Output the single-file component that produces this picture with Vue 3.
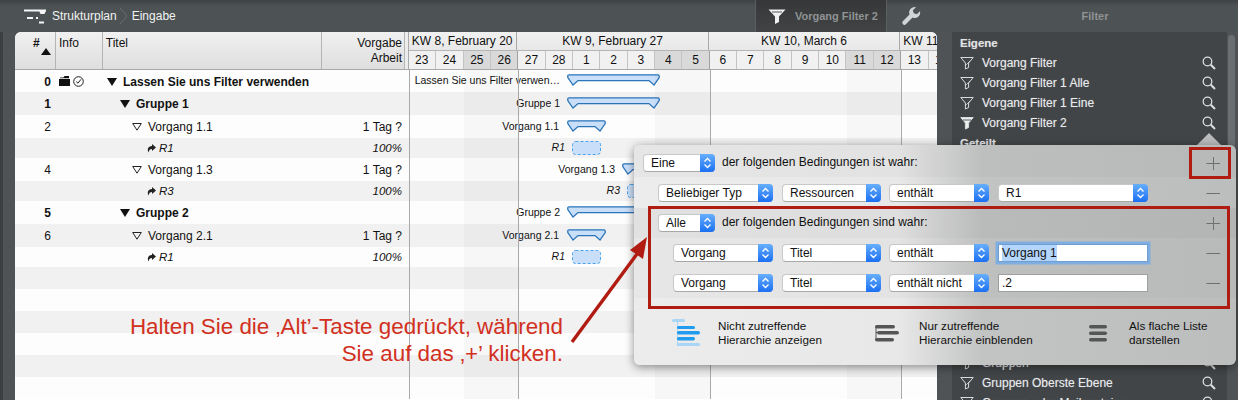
<script setup>
const rows = [
  { id: '0', h: 22, kind: 'root', title: 'Lassen Sie uns Filter verwenden', bar: { type: 'sum', x: 157, w: 93 }, label: 'Lassen Sie uns Filter verwen…', end: 150 },
  { id: '1', h: 23, kind: 'group', title: 'Gruppe 1', bar: { type: 'sum', x: 157, w: 93 }, label: 'Gruppe 1', end: 150 },
  { id: '2', h: 23, kind: 'task', title: 'Vorgang 1.1', work: '1 Tag ?', bar: { type: 'sum', x: 157, w: 39 }, label: 'Vorgang 1.1', end: 149 },
  { id: '', h: 20, kind: 'res', title: 'R1', work: '100%', bar: { type: 'box', x: 162, w: 29 }, label: 'R1', end: 155 },
  { id: '4', h: 23, kind: 'task', title: 'Vorgang 1.3', work: '1 Tag ?', bar: { type: 'sum', x: 212, w: 39 }, label: 'Vorgang 1.3', end: 205 },
  { id: '', h: 20, kind: 'res', title: 'R3', work: '100%', bar: { type: 'box', x: 217, w: 29 }, label: 'R3', end: 210 },
  { id: '5', h: 23, kind: 'group', title: 'Gruppe 2', bar: { type: 'sum', x: 157, w: 93 }, label: 'Gruppe 2', end: 150 },
  { id: '6', h: 23, kind: 'task', title: 'Vorgang 2.1', work: '1 Tag ?', bar: { type: 'sum', x: 157, w: 39 }, label: 'Vorgang 2.1', end: 149 },
  { id: '', h: 20, kind: 'res', title: 'R1', work: '100%', bar: { type: 'box', x: 162, w: 29 }, label: 'R1', end: 155 },
  { id: '', h: 22, kind: 'empty' },
  { id: '', h: 22, kind: 'empty' },
  { id: '', h: 22, kind: 'empty' },
  { id: '', h: 22, kind: 'empty' },
  { id: '', h: 22, kind: 'empty' },
  { id: '', h: 22, kind: 'empty' }
]

const weeks = [
  { label: 'KW 8, February 20', width: 109.4 },
  { label: 'KW 9, February 27', width: 191.45 },
  { label: 'KW 10, March 6', width: 191.45 },
  { label: 'KW 11', width: 37 }
]

const days = [23, 24, 25, 26, 27, 28, 1, 2, 3, 4, 5, 6, 7, 8, 9, 10, 11, 12, 13, 14]
const weekend = (i) => [2, 3, 9, 10, 16, 17].includes(i)
const weekStart = (i) => [4, 11, 18].includes(i)

function barPath(w) {
  return `M2 .8H${w - 2}Q${w - .8} .8 ${w - .8} 2V3.5L${w - 6} 11L${w - 11} 6.6H11L6 11L.8 3.5V2Q.8 .8 2 .8Z`
}

const ownFilters = [
  { name: 'Vorgang Filter' },
  { name: 'Vorgang Filter 1 Alle' },
  { name: 'Vorgang Filter 1 Eine' },
  { name: 'Vorgang Filter 2', active: true }
]
const lowerFilters = ['Gruppen', 'Gruppen Oberste Ebene', 'Gruppen oder Meilensteine']
</script>

<template>
  <div class="page">
    <header class="topbar">
      <div class="crumbs">
        <svg class="app-icon" width="22" height="16" viewBox="0 0 22 16">
          <path d="M0 2.5H22" stroke="#f6f6f6" stroke-width="2" />
          <path d="M15 2.5H22L20.5 6H16.5Z" fill="#f6f6f6" />
          <path d="M3 10H9M12 10H14M15 14.5H20" stroke="#f6f6f6" stroke-width="2" />
        </svg>
        <span class="crumb">Strukturplan</span>
        <svg class="crumb-sep" width="10" height="18" viewBox="0 0 10 18">
          <path d="M1 1L8 9L1 17" fill="none" stroke="#6c7072" />
        </svg>
        <span class="crumb">Eingabe</span>
      </div>
      <div class="filter-btn">
        <svg width="18" height="17" viewBox="0 0 18 17">
          <path d="M.5 1.5H17.5L11 8.5V14L7 16V8.5Z" fill="#f0f0f0" />
          <path d="M4 4H14" stroke="#55595b" />
        </svg>
        <span>Vorgang Filter 2</span>
      </div>
      <svg class="wrench" width="20" height="20" viewBox="0 0 20 20">
        <path d="M13.5 1a5.5 5.5 0 0 0-5 7.6L1.8 15.2a2.2 2.2 0 0 0 3.1 3.1l6.6-6.7a5.5 5.5 0 0 0 7.5-6.4l-3.2 3.1-3-1-1-3L15 1.2a5.5 5.5 0 0 0-1.5-.2Z" fill="#d2d5d5" />
      </svg>
      <div class="side-title">Filter</div>
    </header>

    <main class="main">
      <section class="table">
        <div class="thead">
          <div class="th th-num">
            <span>#</span>
            <i class="sort"></i>
          </div>
          <div class="th th-info">Info</div>
          <div class="th th-title">Titel</div>
          <div class="th th-work">Vorgabe<br />Arbeit</div>
          <div class="th-gap"></div>
          <div class="gantt-head">
            <div class="weeks">
              <div v-for="w in weeks" :key="w.label" class="week" :style="{ width: w.width + 'px' }">{{ w.label }}</div>
            </div>
            <div class="days">
              <div v-for="(d, i) in days" :key="i" class="day" :class="{ off: weekend(i), start: weekStart(i) }">{{ d }}</div>
            </div>
          </div>
        </div>

        <div class="tbody">
          <div v-for="(r, n) in rows" :key="n" class="row" :class="[r.kind, n % 2 ? 'odd' : 'even']" :style="{ height: r.h + 'px' }">
            <div class="c-num">{{ r.id }}</div>
            <div class="c-info">
              <template v-if="r.kind === 'root'">
                <svg width="11" height="10" viewBox="0 0 11 10">
                  <path d="M0 3H11V10H0Z M1 1.5H4.5L5.5 0H10V2.2H1Z" fill="#111" />
                </svg>
                <svg width="11" height="11" viewBox="0 0 11 11">
                  <circle cx="5.5" cy="5.5" r="4.8" fill="none" stroke="#222" />
                  <path d="M3.3 5.6L5 7.2L8 3.3" fill="none" stroke="#222" />
                </svg>
              </template>
            </div>
            <div class="c-title">
              <svg v-if="r.kind === 'root' || r.kind === 'group'" class="tri" width="10" height="8" viewBox="0 0 10 8">
                <path d="M0 0H10L5 8Z" fill="#111" />
              </svg>
              <svg v-if="r.kind === 'task'" class="tri" width="10" height="8" viewBox="0 0 10 8">
                <path d="M.7 .5H9.3L5 7.2Z" fill="none" stroke="#222" />
              </svg>
              <svg v-if="r.kind === 'res'" class="res-arrow" width="9" height="9" viewBox="0 0 9 9">
                <path d="M5 0L9 3.5L5 7V5C3 5 2 6 1.5 8.5C.2 6 .5 2 5 2Z" fill="#222" />
              </svg>
              <span>{{ r.title }}</span>
            </div>
            <div class="c-work">{{ r.work }}</div>
            <div class="chart">
              <template v-if="r.bar">
                <span class="bar-label" :class="{ it: r.kind === 'res' }" :style="{ right: 528 - r.end + 'px' }">{{ r.label }}</span>
                <svg v-if="r.bar.type === 'sum'" class="bar" :style="{ left: r.bar.x + 'px' }" :width="r.bar.w" height="12" :viewBox="`0 0 ${r.bar.w} 12`">
                  <path :d="barPath(r.bar.w)" fill="#c9dff9" stroke="#2a74ba" stroke-width="1.3" />
                </svg>
                <svg v-else class="bar" :style="{ left: r.bar.x + 'px' }" :width="r.bar.w" height="14" :viewBox="`0 0 ${r.bar.w} 14`">
                  <rect x=".5" y=".5" :width="r.bar.w - 1" height="13" rx="3" fill="#c9dff9" stroke="#4aa3ee" stroke-dasharray="3 2" />
                </svg>
              </template>
            </div>
          </div>
          <div class="grid-over">
            <div v-for="(d, i) in days" :key="i" class="col" :class="{ off: weekend(i), start: weekStart(i) }"></div>
          </div>
        </div>
      </section>

      <aside class="sidebar">
        <div class="side-head">Eigene</div>
        <div v-for="f in ownFilters" :key="f.name" class="side-row">
          <svg width="14" height="14" viewBox="0 0 14 14">
            <path d="M.8 1.5H13.2L8.6 7V11.5L5.4 13V7Z" :fill="f.active ? '#eceeee' : 'none'" stroke="#d8dbdb" />
            <path v-if="f.active" d="M3 4H11" stroke="#5a5e60" />
            <path v-else d="M5.5 9.5L10 5" stroke="#d8dbdb" stroke-width=".8" />
          </svg>
          <span>{{ f.name }}</span>
          <svg class="lens" width="14" height="14" viewBox="0 0 14 14">
            <circle cx="5.5" cy="5.5" r="4.3" fill="none" stroke="#dcdfdf" stroke-width="1.3" />
            <path d="M8.8 8.8L13 13" stroke="#dcdfdf" stroke-width="2" />
          </svg>
        </div>
        <div class="side-head">Geteilt</div>
        <div class="side-hidden"></div>
        <div v-for="f in lowerFilters" :key="f" class="side-row">
          <svg width="14" height="14" viewBox="0 0 14 14">
            <path d="M.8 1.5H13.2L8.6 7V11.5L5.4 13V7Z" fill="none" stroke="#d8dbdb" />
            <path d="M5.5 9.5L10 5" stroke="#d8dbdb" stroke-width=".8" />
          </svg>
          <span>{{ f }}</span>
          <svg class="lens" width="14" height="14" viewBox="0 0 14 14">
            <circle cx="5.5" cy="5.5" r="4.3" fill="none" stroke="#dcdfdf" stroke-width="1.3" />
            <path d="M8.8 8.8L13 13" stroke="#dcdfdf" stroke-width="2" />
          </svg>
        </div>
      </aside>
      <div class="scrollbar"></div>
    </main>

    <div class="pop-tip"></div>
    <section class="popup">
      <div class="p-row p-top">
        <div class="sel w72"><span>Eine</span><b class="cap"><svg width="9" height="12" viewBox="0 0 9 12"><path d="M1.5 4.5L4.5 1.5L7.5 4.5M1.5 7.5L4.5 10.5L7.5 7.5" fill="none" stroke="#fff" stroke-width="1.3" /></svg></b></div>
        <span class="p-label">der folgenden Bedingungen ist wahr:</span>
        <svg class="pm" width="16" height="18" viewBox="0 0 16 18"><path d="M1.5 9.5H15M8.5 3V16" stroke="#6f6f6f" /></svg>
      </div>
      <div class="p-row p-cond">
        <div class="sel w115"><span>Beliebiger Typ</span><b class="cap"><svg width="9" height="12" viewBox="0 0 9 12"><path d="M1.5 4.5L4.5 1.5L7.5 4.5M1.5 7.5L4.5 10.5L7.5 7.5" fill="none" stroke="#fff" stroke-width="1.3" /></svg></b></div>
        <div class="sel w99"><span>Ressourcen</span><b class="cap"><svg width="9" height="12" viewBox="0 0 9 12"><path d="M1.5 4.5L4.5 1.5L7.5 4.5M1.5 7.5L4.5 10.5L7.5 7.5" fill="none" stroke="#fff" stroke-width="1.3" /></svg></b></div>
        <div class="sel w100"><span>enthält</span><b class="cap"><svg width="9" height="12" viewBox="0 0 9 12"><path d="M1.5 4.5L4.5 1.5L7.5 4.5M1.5 7.5L4.5 10.5L7.5 7.5" fill="none" stroke="#fff" stroke-width="1.3" /></svg></b></div>
        <div class="sel w150"><span>R1</span><b class="cap"><svg width="9" height="12" viewBox="0 0 9 12"><path d="M1.5 4.5L4.5 1.5L7.5 4.5M1.5 7.5L4.5 10.5L7.5 7.5" fill="none" stroke="#fff" stroke-width="1.3" /></svg></b></div>
        <svg class="pm" width="16" height="18" viewBox="0 0 16 18"><path d="M1.5 9.5H15" stroke="#6f6f6f" /></svg>
      </div>
      <div class="p-row p-group">
        <div class="sel w57"><span>Alle</span><b class="cap"><svg width="9" height="12" viewBox="0 0 9 12"><path d="M1.5 4.5L4.5 1.5L7.5 4.5M1.5 7.5L4.5 10.5L7.5 7.5" fill="none" stroke="#fff" stroke-width="1.3" /></svg></b></div>
        <span class="p-label">der folgenden Bedingungen sind wahr:</span>
        <svg class="pm" width="16" height="18" viewBox="0 0 16 18"><path d="M1.5 9.5H15M8.5 3V16" stroke="#6f6f6f" /></svg>
      </div>
      <div class="p-inner">
        <div class="p-row p-sub">
          <div class="sel w100"><span>Vorgang</span><b class="cap"><svg width="9" height="12" viewBox="0 0 9 12"><path d="M1.5 4.5L4.5 1.5L7.5 4.5M1.5 7.5L4.5 10.5L7.5 7.5" fill="none" stroke="#fff" stroke-width="1.3" /></svg></b></div>
          <div class="sel w99"><span>Titel</span><b class="cap"><svg width="9" height="12" viewBox="0 0 9 12"><path d="M1.5 4.5L4.5 1.5L7.5 4.5M1.5 7.5L4.5 10.5L7.5 7.5" fill="none" stroke="#fff" stroke-width="1.3" /></svg></b></div>
          <div class="sel w100"><span>enthält</span><b class="cap"><svg width="9" height="12" viewBox="0 0 9 12"><path d="M1.5 4.5L4.5 1.5L7.5 4.5M1.5 7.5L4.5 10.5L7.5 7.5" fill="none" stroke="#fff" stroke-width="1.3" /></svg></b></div>
          <div class="field focus"><span class="picked">Vorgang 1</span></div>
          <svg class="pm" width="16" height="18" viewBox="0 0 16 18"><path d="M1.5 9.5H15" stroke="#6f6f6f" /></svg>
        </div>
        <div class="p-row p-sub">
          <div class="sel w100"><span>Vorgang</span><b class="cap"><svg width="9" height="12" viewBox="0 0 9 12"><path d="M1.5 4.5L4.5 1.5L7.5 4.5M1.5 7.5L4.5 10.5L7.5 7.5" fill="none" stroke="#fff" stroke-width="1.3" /></svg></b></div>
          <div class="sel w99"><span>Titel</span><b class="cap"><svg width="9" height="12" viewBox="0 0 9 12"><path d="M1.5 4.5L4.5 1.5L7.5 4.5M1.5 7.5L4.5 10.5L7.5 7.5" fill="none" stroke="#fff" stroke-width="1.3" /></svg></b></div>
          <div class="sel w100"><span>enthält nicht</span><b class="cap"><svg width="9" height="12" viewBox="0 0 9 12"><path d="M1.5 4.5L4.5 1.5L7.5 4.5M1.5 7.5L4.5 10.5L7.5 7.5" fill="none" stroke="#fff" stroke-width="1.3" /></svg></b></div>
          <div class="field"><span>.2</span></div>
          <svg class="pm" width="16" height="18" viewBox="0 0 16 18"><path d="M1.5 9.5H15" stroke="#6f6f6f" /></svg>
        </div>
      </div>
      <div class="p-foot">
        <div class="opt opt1">
          <svg width="46" height="30" viewBox="0 0 46 30">
            <path d="M5.5 4V28M5.5 10H8M5.5 15H8M5.5 21H8M5.5 27H8" stroke="#a9d5f6" fill="none" />
            <rect x="0" y="1" width="13" height="3" rx="1.5" fill="#a9d5f6" />
            <rect x="5" y="8" width="18" height="3" rx="1.5" fill="#1f9bf0" />
            <rect x="5" y="13" width="23" height="3.4" rx="1.7" fill="#1f9bf0" />
            <rect x="5" y="19" width="18" height="3.4" rx="1.7" fill="#1f9bf0" />
            <rect x="5" y="25" width="23" height="3" rx="1.5" fill="#a9d5f6" />
          </svg>
          <p>Nicht zutreffende<br />Hierarchie anzeigen</p>
        </div>
        <div class="opt opt2">
          <svg width="44" height="30" viewBox="0 0 44 30">
            <path d="M1 8V22M1 14.5H3" stroke="#555" fill="none" />
            <rect x="0" y="7" width="20" height="3.4" rx="1.7" fill="#555" />
            <rect x="2" y="13" width="22" height="3.6" rx="1.8" fill="#555" />
            <rect x="0" y="20" width="19" height="3.4" rx="1.7" fill="#555" />
          </svg>
          <p>Nur zutreffende<br />Hierarchie einblenden</p>
        </div>
        <div class="opt opt3">
          <svg width="40" height="30" viewBox="0 0 40 30">
            <rect x="0" y="7" width="18" height="3.4" rx="1.7" fill="#555" />
            <rect x="0" y="13.5" width="18" height="3.6" rx="1.8" fill="#555" />
            <rect x="0" y="20" width="18" height="3.4" rx="1.7" fill="#555" />
          </svg>
          <p>Als flache Liste<br />darstellen</p>
        </div>
      </div>
    </section>

    <div class="mark mark-plus"></div>
    <div class="mark mark-group"></div>
    <svg class="arrow" width="90" height="115" viewBox="0 0 90 115">
      <path d="M3 107L68 19" stroke="#b01c12" stroke-width="3.4" fill="none" />
      <path d="M78 2L74 24L61 15Z" fill="#b01c12" />
    </svg>
    <p class="note">Halten Sie die ‚Alt’-Taste gedrückt, während<br />Sie auf das ‚+’ klicken.</p>
  </div>
</template>

<style>
html, body { margin: 0; background: #4d5153; }
</style>

<style scoped>
.page {
  position: relative;
  width: 1238px;
  height: 400px;
  overflow: hidden;
  background: #4f5355;
  font: 12px/14px "Liberation Sans", Arial, sans-serif;
  color: #111;
}
.topbar {
  display: flex;
  align-items: center;
  height: 32px;
  background: linear-gradient(#3f4244, #4d5254 6px);
}
.crumbs { flex: 1; display: flex; align-items: center; padding-left: 24px; }
.app-icon { margin-right: 6px; margin-top: -1px; }
.crumb { color: #f0f2f2; }
.crumb-sep { margin: 0 3px 0 2px; }
.filter-btn {
  box-sizing: border-box;
  width: 132px;
  height: 32px;
  display: flex;
  align-items: center;
  padding-left: 12px;
  gap: 9px;
  background: linear-gradient(#353739, #414345);
  border-left: 1px solid #5a5e60;
  border-right: 1px solid #5a5e60;
  color: #8f9394;
  font-weight: bold;
  font-size: 11px;
}
.wrench { margin-left: 14px; }
.side-title {
  margin-left: 31px;
  width: 286px;
  text-align: center;
  font-weight: bold;
  font-size: 11px;
  color: #8f9394;
}
.main {
  display: flex;
  height: 368px;
  background: linear-gradient(90deg, #3c3f41 3px, transparent 3px);
}
.table {
  position: relative;
  width: 922px;
  margin-left: 15px;
  background: #fff;
  border-radius: 6px 6px 0 0;
  overflow: hidden;
  flex: none;
}
.thead {
  display: flex;
  height: 38px;
  box-sizing: border-box;
  border-bottom: 1px solid #a9a9a9;
  background: linear-gradient(#f1f1f1, #dedede);
}
.th {
  box-sizing: border-box;
  border-right: 1px solid #b5b5b5;
  padding-top: 4px;
  line-height: 15px;
}
.th-num { position: relative; width: 41px; padding-left: 18px; font-weight: bold; }
.sort {
  position: absolute;
  left: 26px;
  top: 16px;
  border: 5px solid transparent;
  border-top: 0;
  border-bottom: 7px solid #111;
}
.th-info { width: 47px; padding-left: 3px; }
.th-title { width: 220px; padding-left: 3px; }
.th-work { width: 83px; padding-right: 2px; text-align: right; }
.th-gap { width: 3px; background: #ececec; }
.gantt-head { width: 528px; border-left: 1px solid #a9a9a9; overflow: hidden; flex: none; }
.weeks { display: flex; height: 18px; margin-left: -1px; border-bottom: 1px solid #b5b5b5; }
.week {
  flex: none;
  box-sizing: border-box;
  text-align: center;
  line-height: 18px;
  white-space: nowrap;
  overflow: hidden;
  border-right: 1px solid #a9a9a9;
}
.week:last-child { border-right: 0; text-align: left; padding-left: 3px; }
.days { display: flex; height: 19px; margin-left: -1px; background: #f1f1f1; }
.day {
  flex: none;
  width: 27.35px;
  box-sizing: border-box;
  text-align: center;
  line-height: 19px;
  border-left: 1px solid #c4c4c4;
}
.day:first-child { border-left: 0; }
.day.off { background: #d9d9d9; }
.day.start { border-left-color: #a0a0a0; }
.tbody { position: relative; }
.row { display: flex; align-items: center; }
.row.even { background: #fdfdfd; }
.row.odd { background: #f1f1f1; }
.c-num { box-sizing: border-box; width: 40px; flex: none; text-align: right; padding-right: 4px; }
.c-info { width: 47px; flex: none; display: flex; align-items: center; gap: 3px; padding-left: 4px; box-sizing: border-box; }
.c-title { width: 221px; flex: none; display: flex; align-items: center; box-sizing: border-box; white-space: nowrap; }
.c-work { width: 86px; flex: none; box-sizing: border-box; padding-right: 7px; text-align: right; }
.root .c-num, .group .c-num, .root .c-title, .group .c-title { font-weight: bold; }
.root .c-num, .root .c-title { padding-top: 2px; }
.root .c-title { padding-left: 5px; }
.root .tri { margin-right: 6px; }
.group .c-title { padding-left: 18px; }
.group .tri { margin-right: 6px; }
.task .c-title { padding-left: 30px; }
.task .tri { margin-right: 6px; }
.res .c-title { padding-left: 45px; font-style: italic; font-size: 11.5px; }
.res-arrow { margin-right: 3px; }
.res .c-work { font-style: italic; font-size: 11.5px; }
.chart {
  position: relative;
  width: 528px;
  height: 100%;
  flex: none;
  border-left: 1px solid #a9a9a9;
}
.bar { position: absolute; top: calc(50% - 7px); }
.bar-label {
  position: absolute;
  top: calc(50% - 8px);
  white-space: nowrap;
  font-size: 10.5px;
}
.bar-label.it { font-style: italic; }
.grid-over {
  position: absolute;
  left: 394px;
  top: 0;
  bottom: 0;
  display: flex;
  pointer-events: none;
}
.col { flex: none; width: 27.35px; box-sizing: border-box; }
.col.off { background: rgba(0, 0, 0, .025); }
.col.start { border-left: 1px solid #a9a9a9; }
.sidebar {
  flex: none;
  box-sizing: border-box;
  width: 275px;
  margin-left: 15px;
  padding: 1px 11px 0 8px;
  background: #424547;
  color: #e9ecee;
  overflow: hidden;
  text-shadow: 0 0 1px rgba(255, 255, 255, .35);
}
.side-head { height: 20px; line-height: 20px; font-weight: bold; font-size: 11.5px; color: #e2e4e4; }
.side-row { display: flex; align-items: center; height: 20px; }
.side-row > span { margin-left: 8px; flex: 1; }
.side-hidden { height: 200px; }
.scrollbar {
  flex: none;
  width: 7px;
  height: 200px;
  margin: 3px 0 0 1px;
  border-radius: 4px;
  background: #6a6e70;
}
.pop-tip {
  position: absolute;
  left: 1197px;
  top: 133px;
  border-left: 12px solid transparent;
  border-right: 12px solid transparent;
  border-bottom: 12px solid #b9bbbc;
}
.popup {
  position: absolute;
  left: 634px;
  top: 145px;
  width: 602px;
  height: 220px;
  border-radius: 6px;
  overflow: hidden;
  background: linear-gradient(90deg, #ececec 0, #e8e8e8 44%, #c2c3c3 58%, #bcbebe 100%);
  box-shadow: 0 2px 10px rgba(0, 0, 0, .45);
}
.p-row { display: flex; align-items: flex-start; box-sizing: border-box; }
.p-top { height: 32px; padding: 9px 15px 0 9px; background: rgba(0, 0, 0, .025); }
.p-cond { height: 31px; padding: 7px 15px 0 24px; gap: 0; }
.p-group { height: 30px; padding: 6px 15px 0 24px; background: rgba(0, 0, 0, .045); }
.p-inner { background: rgba(0, 0, 0, .018); }
.p-sub { height: 30px; padding: 6px 15px 0 39px; }
.p-label { margin-left: 7px; line-height: 17px; }
.pm { margin-left: auto; }
.sel {
  box-sizing: border-box;
  position: relative;
  height: 18px;
  margin-right: 9px;
  padding-left: 7px;
  line-height: 17px;
  background: #fff;
  border-radius: 4px;
  border: 1px solid #c8c8c8;
  border-bottom-color: #a8a8a8;
  flex: none;
}
.p-top .sel, .p-group .sel { margin-right: 0; }
.cap {
  position: absolute;
  right: -1px;
  top: -1px;
  width: 15px;
  height: 18px;
  display: flex;
  align-items: center;
  justify-content: center;
  border-radius: 0 4px 4px 0;
  background: linear-gradient(#66aefc, #1b6ff2);
}
.w57 { width: 57px; }
.w72 { width: 72px; }
.w99 { width: 99px; margin-right: 8px; }
.w100 { width: 100px; }
.w115 { width: 115px; }
.w150 { width: 150px; margin-right: 0; }
.field {
  box-sizing: border-box;
  width: 150px;
  height: 18px;
  padding-left: 3px;
  line-height: 16px;
  background: #fff;
  border: 1px solid #9f9f9f;
}
.field.focus { border-color: #6f9fd2; box-shadow: 0 0 0 2.5px #80aee0; }
.picked { background: #b4d5fc; padding: 1px 0; }
.p-foot { display: flex; padding: 20px 0 0 38px; font-size: 11.7px; }
.opt { display: flex; align-items: flex-start; flex: none; }
.opt p { margin: 1px 0 0; white-space: nowrap; }
.opt1 { width: 203px; }
.opt2 { width: 214px; }
.mark { position: absolute; box-sizing: border-box; border: 3px solid #b01c12; }
.mark-plus { left: 1189px; top: 147px; width: 42px; height: 32px; }
.mark-group { left: 648px; top: 206px; width: 582px; height: 103px; }
.arrow { position: absolute; left: 569px; top: 235px; }
.note {
  position: absolute;
  right: 675px;
  top: 313px;
  margin: 0;
  text-align: right;
  white-space: nowrap;
  font-size: 22.4px;
  line-height: 27px;
  color: #d2301e;
}
</style>
